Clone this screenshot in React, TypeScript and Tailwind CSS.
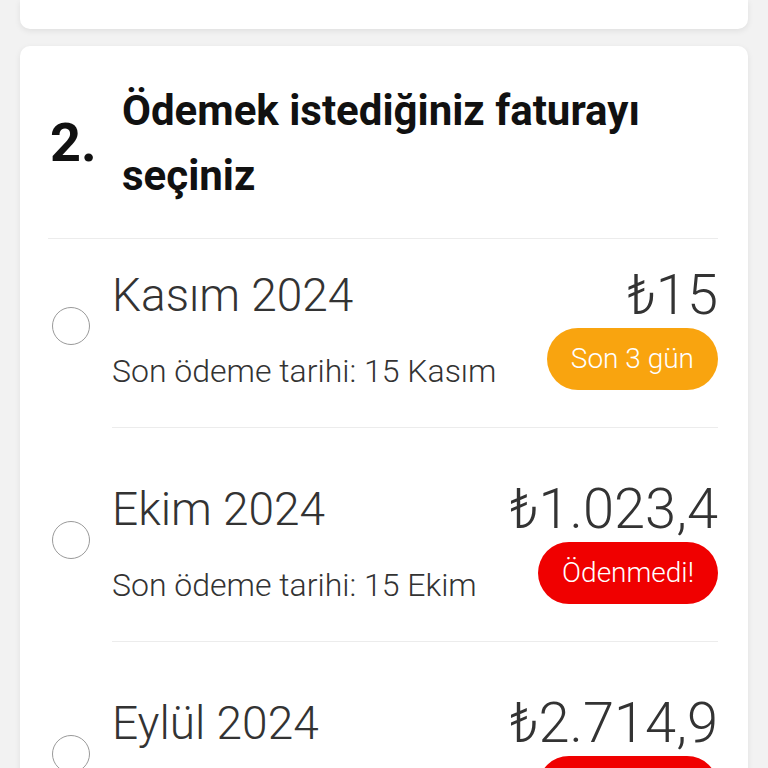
import React from "react";

type Bill = {
  month: string;
  amount: string;
  due: string;
  badge: string;
  tone: "orange" | "red";
};

const bills: Bill[] = [
  { month: "Kasım 2024", amount: "₺15", due: "Son ödeme tarihi: 15 Kasım", badge: "Son 3 gün", tone: "orange" },
  { month: "Ekim 2024", amount: "₺1.023,4", due: "Son ödeme tarihi: 15 Ekim", badge: "Ödenmedi!", tone: "red" },
  { month: "Eylül 2024", amount: "₺2.714,9", due: "Son ödeme tarihi: 15 Eylül", badge: "Ödenmedi!", tone: "red" },
];

function BillRow({ bill, first }: { bill: Bill; first: boolean }) {
  return (
    <div className={`flex items-center ${first ? "pt-[29px]" : "pt-[54px]"} pb-[36px]`}>
      <div className="flex w-[64px] shrink-0 items-center">
        <span className="mb-[7px] ml-[4px] block size-[38px] rounded-full border-[1.5px] border-[#9a9a9a] bg-white" />
      </div>
      <div className="flex flex-1 items-start justify-between">
        <div className="flex flex-col">
          <span className="text-[46px] leading-[54px] font-light text-[#333]">{bill.month}</span>
          <span className="mt-[29px] text-[32px] leading-[40px] font-light text-[#333]">{bill.due}</span>
        </div>
        <div className="flex flex-col items-end">
          <span className="text-[56px] leading-[54px] font-light text-[#333]">{bill.amount}</span>
          <span
            className={`mt-[6px] flex h-[62px] items-center rounded-full px-6 text-[28px] font-light text-white ${
              bill.tone === "orange" ? "bg-[#f9a40f]" : "bg-[#f00000]"
            }`}
          >
            {bill.badge}
          </span>
        </div>
      </div>
    </div>
  );
}

export default function App() {
  return (
    <div className="h-[768px] overflow-hidden bg-[#f2f2f2] px-[20px] font-['Roboto',sans-serif]">
      <div className="h-[29px] rounded-b-[10px] bg-white shadow-[0_2px_6px_rgba(0,0,0,0.08)]" />

      <div className="mt-[17px] rounded-[10px] bg-white pr-[30px] pl-[28px] pt-[32px] shadow-[0_2px_6px_rgba(0,0,0,0.08)]">
        <div className="flex items-center border-b border-[#ececec] pb-[30px]">
          <span className="w-[74px] shrink-0 pl-[2px] text-[54px] leading-none font-bold text-[#111]">2.</span>
          <h2 className="text-[42px] leading-[65px] font-bold text-[#111]">
            Ödemek istediğiniz faturayı seçiniz
          </h2>
        </div>

        {bills.map((bill, i) => (
          <div key={bill.month}>
            {i > 0 && <div className="ml-[64px] h-px bg-[#ececec]" />}
            <BillRow bill={bill} first={i === 0} />
          </div>
        ))}
      </div>
    </div>
  );
}
